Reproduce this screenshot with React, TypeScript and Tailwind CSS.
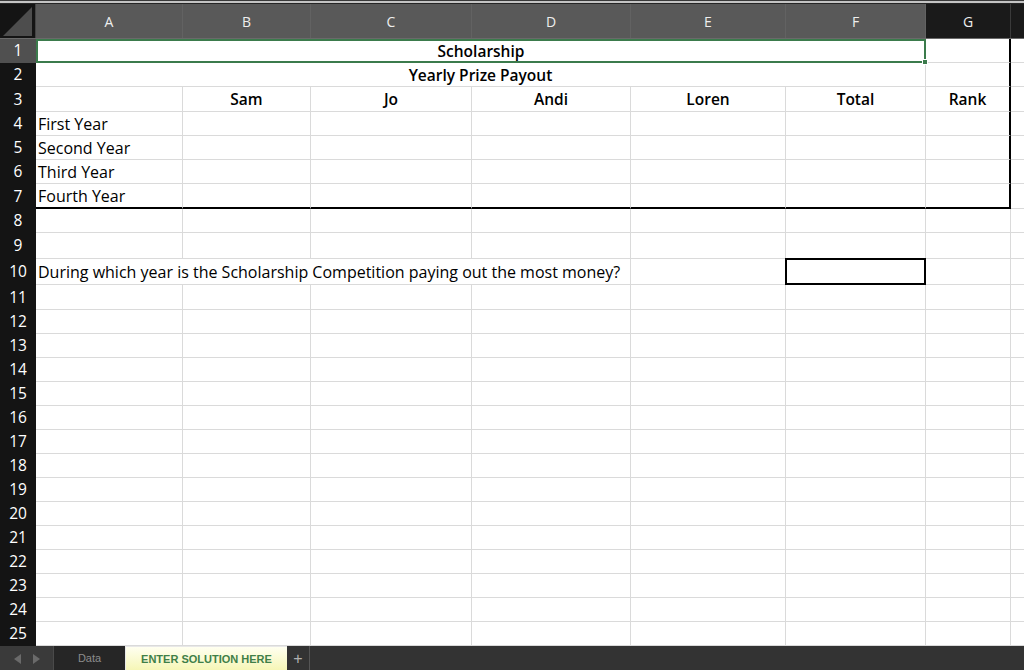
import type { ReactNode } from 'react'

const H: Record<number, string> = { 24: 'h-[24px]', 25: 'h-[25px]', 26: 'h-[26px]' }
const rowHeights = [24, 24, 25, 24, 24, 24, 25, 24, 26, 26, 25, 24, 24, 24, 24, 24, 24, 24, 24, 24, 24, 24, 24, 24, 24]

const colW = ['w-[147px]', 'w-[128px]', 'w-[161px]', 'w-[159px]', 'w-[155px]', 'w-[140px]', 'w-[85px]']
const letters = ['A', 'B', 'C', 'D', 'E', 'F', 'G']

const grid = 'shrink-0 border-r border-b border-[#dadada]'

function RowNum({ n, active }: { n: number; active?: boolean }) {
  return (
    <div
      className={`flex w-[36px] shrink-0 items-center justify-center text-[15.5px] text-white ${
        active ? 'bg-[#505050]' : 'bg-[#141414]'
      }`}
    >
      {n}
    </div>
  )
}

function Cell({
  col,
  children,
  className = '',
}: {
  col: number
  children?: ReactNode
  className?: string
}) {
  return <div className={`${grid} ${colW[col]} flex items-center ${className}`}>{children}</div>
}

function Rest() {
  return <div className="flex-1 border-b border-[#dadada]" />
}

function PlainRow({ n }: { n: number }) {
  return (
    <div className={`flex ${H[rowHeights[n - 1]]}`}>
      <RowNum n={n} />
      {colW.map((_, i) => (
        <Cell key={i} col={i} />
      ))}
      <Rest />
    </div>
  )
}

function YearRow({ n, label }: { n: number; label: string }) {
  const last = n === 7
  const edge = last ? 'border-b-2 border-b-black' : ''
  return (
    <div className={`flex ${H[rowHeights[n - 1]]}`}>
      <RowNum n={n} />
      <Cell col={0} className={`pl-[2px] ${edge}`}>
        {label}
      </Cell>
      {[1, 2, 3, 4, 5].map((i) => (
        <Cell key={i} col={i} className={edge} />
      ))}
      <Cell col={6} className={`border-r-2 border-r-black ${edge}`} />
      <Rest />
    </div>
  )
}

export default function App() {
  const heads = ['Sam', 'Jo', 'Andi', 'Loren', 'Total', 'Rank']

  return (
    <div className="flex h-[670px] w-[1024px] flex-col overflow-hidden bg-white font-['Open_Sans',sans-serif] text-[16px] text-black">
      {/* top strip */}
      <div className="h-[1px] bg-[#3a3a3a]" />
      <div className="h-[2px] bg-[#c4c4c4]" />
      <div className="h-[1px] bg-[#262626]" />

      {/* column headers */}
      <div className="flex h-[35px] border-b border-[#6a6a6a] text-[14px] text-[#eeeeee]">
        <div className="relative w-[36px] shrink-0 border-r border-[#444] bg-[#141414]">
          <svg className="absolute bottom-[2px] right-[3px]" width="29" height="29" viewBox="0 0 29 29">
            <polygon points="29,0 29,29 0,29" fill="#4d4d4d" />
          </svg>
        </div>
        {letters.map((l, i) => (
          <div
            key={l}
            className={`flex shrink-0 items-center justify-center ${colW[i]} ${
              i < 6 ? 'border-r border-[#626262] bg-[#595959]' : 'border-r border-[#3a3a3a] bg-[#1a1a1a]'
            }`}
          >
            {l}
          </div>
        ))}
        <div className="flex-1 bg-[#1a1a1a]" />
      </div>

      {/* sheet */}
      <div className="flex flex-col">
        {/* row 1 */}
        <div className={`flex ${H[rowHeights[0]]}`}>
          <RowNum n={1} active />
          <div className="relative flex w-[890px] shrink-0 items-center justify-center border-2 border-[#3b7b4c] pt-[1px] text-[15.5px] font-semibold">
            Scholarship
            <div className="absolute -bottom-[4px] -right-[4px] h-[6px] w-[6px] border border-white bg-[#3b7b4c]" />
          </div>
          <Cell col={6} className="border-r-2 border-r-black" />
          <Rest />
        </div>

        {/* row 2 */}
        <div className={`flex ${H[rowHeights[1]]}`}>
          <RowNum n={2} />
          <div className={`${grid} flex w-[890px] items-center justify-center pt-[2px] text-[15.5px] font-semibold`}>
            Yearly Prize Payout
          </div>
          <Cell col={6} className="border-r-2 border-r-black" />
          <Rest />
        </div>

        {/* row 3 */}
        <div className={`flex ${H[rowHeights[2]]}`}>
          <RowNum n={3} />
          <Cell col={0} />
          {heads.map((h, i) => (
            <Cell
              key={h}
              col={i + 1}
              className={`justify-center pt-[2px] text-[15.5px] font-semibold ${i === 5 ? 'border-r-2 border-r-black' : ''}`}
            >
              {h}
            </Cell>
          ))}
          <Rest />
        </div>

        <YearRow n={4} label="First Year" />
        <YearRow n={5} label="Second Year" />
        <YearRow n={6} label="Third Year" />
        <YearRow n={7} label="Fourth Year" />

        <PlainRow n={8} />
        <PlainRow n={9} />

        {/* row 10 */}
        <div className={`flex ${H[rowHeights[9]]}`}>
          <RowNum n={10} />
          <div className={`${grid} flex w-[595px] items-center whitespace-nowrap pl-[2px]`}>
            During which year is the Scholarship Competition paying out the most money?
          </div>
          <Cell col={4} />
          <Cell col={5} className="relative">
            <div className="absolute -left-[1px] -top-[1px] bottom-[-1px] right-[-1px] border-2 border-black" />
          </Cell>
          <Cell col={6} />
          <Rest />
        </div>

        {Array.from({ length: 15 }, (_, i) => (
          <PlainRow key={i} n={i + 11} />
        ))}
      </div>

      {/* sheet tabs */}
      <div className="flex h-[24px] bg-[#333333] font-['Liberation_Sans',Arial,sans-serif] text-[11px]">
        <div className="flex w-[54px] items-center justify-center gap-[12px] border-r border-[#4a4a4a] bg-[#3a3a3a] pt-[1px]">
          <svg width="7" height="10" viewBox="0 0 7 10">
            <polygon points="7,0 7,10 0,5" fill="#6a6a6a" />
          </svg>
          <svg width="7" height="10" viewBox="0 0 7 10">
            <polygon points="0,0 0,10 7,5" fill="#6a6a6a" />
          </svg>
        </div>
        <div className="flex w-[71px] items-center justify-center bg-[#262626] pt-[1px] text-[#8c8c8c]">Data</div>
        <div className="flex w-[162px] items-center justify-center border-l border-t border-[#e8e8e8] bg-gradient-to-b from-[#fffff0] to-[#f6f6b6] pt-[1px] font-bold text-[#3f7f48]">
          ENTER SOLUTION HERE
        </div>
        <div className="flex w-[23px] items-center justify-center border-r border-[#555] pt-[1px] text-[16px] text-[#b0b0b0]">
          +
        </div>
        <div className="flex-1" />
      </div>
    </div>
  )
}
